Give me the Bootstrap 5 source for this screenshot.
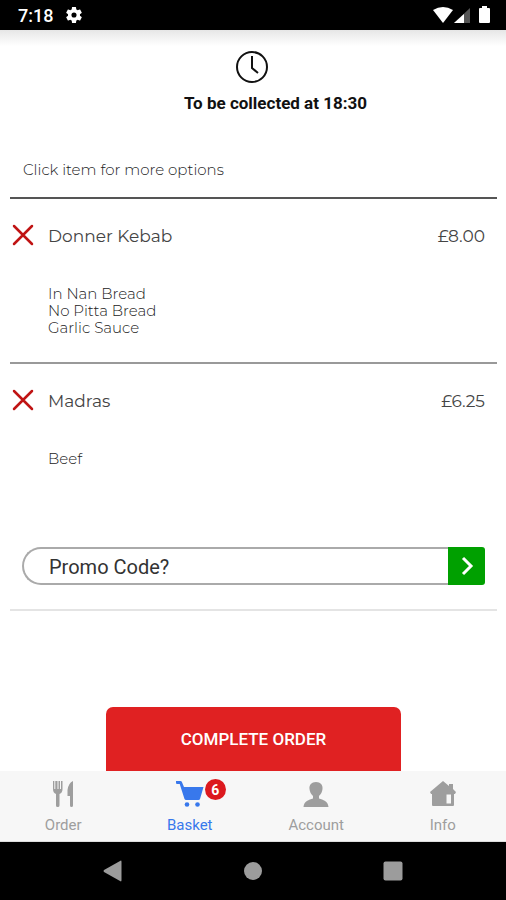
<!DOCTYPE html>
<html lang="en">
<head>
<meta charset="utf-8">
<meta name="viewport" content="width=device-width, initial-scale=1">
<title>Basket</title>
<link href="https://cdn.jsdelivr.net/npm/bootstrap@5.3.0/dist/css/bootstrap.min.css" rel="stylesheet">
<style>
body { font-family: Roboto, sans-serif; color: #111; background: #fff; }
.status-bar { height: 30px; background: #000; color: #fff; padding: 0 16px 0 18px; }
.status-time { font-size: 18px; font-weight: 500; line-height: 30px; padding-top: 2px; }
.status-gear { margin-left: 13px; }
.page-main { padding: 0 9px 0 10px; background: linear-gradient(#e6e6e6, #f3f3f3 8px, #fff 16px) 0 0 / 100% 16px no-repeat; }
.collect-head { padding-top: 20px; }
.collect-clock { padding-right: 3px; }
.collect-time { font-size: 17px; font-weight: 700; line-height: 20px; margin-top: 9px; padding-left: 44px; }
.dish-text { font-family: Montserrat, Inter, sans-serif; font-weight: 300; color: #222; }
.hint { font-size: 15px; line-height: 20px; padding: 47px 13px 17px; margin: 0; border-bottom: 2px solid #555; }
.order-item { padding: 16px 12px 26px 0; }
.order-item + .order-item { border-top: 2px solid #999; }
.item-row { height: 40px; font-size: 17px; font-weight: 400; line-height: 20px; color: #444; }
.item-row span { padding-top: 2px; }
.remove-btn { width: 38px; padding: 0 0 0 2px; border: 0; background: none; text-align: left; line-height: 1; }
.item-extras { margin: 30px 0 0; padding-left: 38px; font-size: 15px; line-height: 17px; }
.promo { padding: 54px 12px 24px 12px; border-bottom: 2px solid #e4e4e4; }
.promo-field { height: 38px; min-width: 0; border: 2px solid #aaa; border-right: 0; border-radius: 19px 0 0 19px; padding: 2px 25px 0; font-size: 20px; color: #333; background: #fff; }
.promo-field::placeholder { color: #333; opacity: 1; }
.promo-go { width: 37px; height: 38px; padding: 0; border: 0; border-radius: 0 3px 3px 0; background: #00a000; }
.complete-btn { width: 295px; max-width: 100%; height: 64px; padding: 2px 0 0; border: 0; border-radius: 7px 7px 0 0; background: #e02122; color: #fff; font-size: 17px; font-weight: 500; }
.tab-bar { height: 71px; background: #f7f7f7; border-bottom: 1px solid #ddd; }
.tab-link { color: #9e9e9e; text-decoration: none; font-size: 15px; line-height: 20px; padding-top: 8px; gap: 6px; }
.tab-link svg { height: 30px; width: 30px; }
.tab-link.current { color: #3878ec; }
.count-dot { top: 0; left: 30px; width: 21px; height: 21px; border-radius: 50%; background: #dc191e; color: #fff; font-size: 14px; font-weight: 700; line-height: 22px; }
.system-bar { height: 58px; background: #000; padding: 0 43px; }
</style>
<script src="https://cdn.jsdelivr.net/npm/bootstrap@5.3.0/dist/js/bootstrap.bundle.min.js"></script>
</head>
<body class="d-flex flex-column min-vh-100">
<header class="status-bar d-flex align-items-center">
  <span class="status-time">7:18</span>
  <svg class="status-gear" width="16" height="16" viewBox="2 2 20 20" fill="#fff" aria-hidden="true"><path d="M19.43 12.98c.04-.32.07-.64.07-.98s-.03-.66-.07-.98l2.11-1.65c.19-.15.24-.42.12-.64l-2-3.46c-.12-.22-.39-.3-.61-.22l-2.49 1c-.52-.4-1.08-.73-1.69-.98l-.38-2.65A.49.49 0 0 0 14 2h-4c-.25 0-.46.18-.49.42l-.38 2.65c-.61.25-1.17.59-1.69.98l-2.49-1c-.23-.09-.49 0-.61.22l-2 3.460c-.13.22-.07.49.12.64l2.11 1.65c-.04.32-.07.65-.07.98s.03.66.07.98l-2.11 1.65c-.19.15-.24.42-.12.64l2 3.46c.12.22.39.3.61.22l2.49-1c.52.4 1.08.73 1.69.98l.38 2.65c.03.24.24.42.49.42h4c.25 0 .46-.18.49-.42l.38-2.65c.61-.25 1.17-.59 1.69-.98l2.49 1c.23.09.49 0 .61-.22l2-3.46c.12-.22.07-.49-.12-.64zM12 15.2a3.2 3.2 0 1 1 0-6.4 3.2 3.2 0 0 1 0 6.4z"/></svg>
  <svg class="ms-auto" width="57" height="18" viewBox="0 0 57 18" aria-hidden="true"><path d="M0 4Q10-2 20 4L10 17z" fill="#fff"/><path d="M21 17 37 2v15z" fill="#555"/><path d="M21 17 31 8v9z" fill="#fff"/><path d="M47 2h2V0h5v2h2q1 0 1 1v13q0 1-1 1h-9q-1 0-1-1V3q0-1 1-1z" fill="#fff"/></svg>
</header>

<main class="page-main flex-grow-1 d-flex flex-column">
  <section class="collect-head text-center">
    <div class="collect-clock d-flex justify-content-center">
      <svg width="34" height="34" viewBox="0 0 34 34" fill="none" stroke="#111" stroke-width="2" aria-hidden="true"><circle cx="17" cy="17" r="15"/><path d="M17 6v12l6 5"/></svg>
    </div>
    <div class="collect-time">To be collected at 18:30</div>
  </section>
  <p class="hint dish-text">Click item for more options</p>

  <article class="order-item dish-text">
    <div class="item-row d-flex align-items-center">
      <button class="remove-btn" type="button" aria-label="Remove Donner Kebab"><svg width="22" height="22" viewBox="0 0 22 22" stroke="#c01414" stroke-width="2.5" stroke-linecap="round"><path d="M2 2l18 18M20 2 2 20"/></svg></button>
      <span>Donner Kebab</span><span class="ms-auto">£8.00</span>
    </div>
    <ul class="item-extras list-unstyled"><li>In Nan Bread</li><li>No Pitta Bread</li><li>Garlic Sauce</li></ul>
  </article>
  <article class="order-item dish-text">
    <div class="item-row d-flex align-items-center">
      <button class="remove-btn" type="button" aria-label="Remove Madras"><svg width="22" height="22" viewBox="0 0 22 22" stroke="#c01414" stroke-width="2.5" stroke-linecap="round"><path d="M2 2l18 18M20 2 2 20"/></svg></button>
      <span>Madras</span><span class="ms-auto">£6.25</span>
    </div>
    <ul class="item-extras list-unstyled"><li>Beef</li></ul>
  </article>

  <form class="promo d-flex">
    <input class="promo-field flex-grow-1" type="text" placeholder="Promo Code?" aria-label="Promo code">
    <button class="promo-go d-flex align-items-center justify-content-center" type="button" aria-label="Apply promo code"><svg width="14" height="20" viewBox="0 0 14 20" fill="none" stroke="#fff" stroke-width="3"><path d="M3 2l8 8-8 8"/></svg></button>
  </form>

  <button class="complete-btn mt-auto mx-auto" type="button">COMPLETE ORDER</button>
</main>

<nav class="tab-bar row g-0 text-center" aria-label="Main">
  <a class="tab-link col d-flex flex-column align-items-center" href="#"><svg viewBox="0 0 30 30" fill="currentColor" aria-hidden="true"><path d="M5 2h1.300v8h1V2h2.200v8h1V2H12v8h1V2h1.500v8q0 4-3 5v11.500q0 1.500-1.800 1.500T8 26.500V15q-3-1-3-5zM25 2v24.500q0 1.500-1.500 1.500T22 26.500V17h-2.500v-6Q20.500 4 25 2z"/></svg><span>Order</span></a>
  <a class="tab-link current col d-flex flex-column align-items-center" href="#" aria-current="page"><span class="position-relative d-flex"><svg viewBox="0 0 30 30" fill="currentColor" aria-hidden="true"><path d="M1 2h4.500q1 0 1.400 1L9 8h19.500l-3.500 12q-.3 1-1.500 1H11q-1 0-1.500-1L4.700 5H2Q1 5 1 3.500z"/><circle cx="12" cy="25.500" r="2.300"/><circle cx="22.500" cy="25.500" r="2.300"/></svg><span class="count-dot position-absolute">6</span></span><span>Basket</span></a>
  <a class="tab-link col d-flex flex-column align-items-center" href="#"><svg viewBox="0 0 30 30" fill="currentColor" aria-hidden="true"><path d="M15 3c-4.500 0-7 3-6.500 7 .3 3 1.500 5 3.500 7v2.500C8 21 3 22 2.500 28h25C27 22 22 21 18 19.500V17c2-2 3.200-4 3.500-7 .5-4-2-7-6.500-7z"/></svg><span>Account</span></a>
  <a class="tab-link col d-flex flex-column align-items-center" href="#"><svg viewBox="0 0 30 30" fill="currentColor" aria-hidden="true"><path fill-rule="evenodd" d="M15 2l6 5V5h4v5l3 3-1 2h-1v11q0 1-1 1H5q-1 0-1-1V15H3l-1-2zM18.500 15.500v9H23v-9z"/></svg><span>Info</span></a>
</nav>
<footer class="system-bar d-flex align-items-center justify-content-around">
  <svg width="20" height="22" viewBox="0 0 20 22" fill="#9c9c9c" role="img" aria-label="Back"><path d="M1 10 17.500.700q1-.4 1 1v18.600q0 1.400-1 1L1 12q-1-1 0-2z"/></svg>
  <svg width="20" height="20" viewBox="0 0 20 20" fill="#9c9c9c" role="img" aria-label="Home"><circle cx="10" cy="10" r="9"/></svg>
  <svg width="20" height="20" viewBox="0 0 20 20" fill="#9c9c9c" role="img" aria-label="Recents"><rect x=".5" y=".5" width="19" height="19" rx="2"/></svg>
</footer>
</body>
</html>
